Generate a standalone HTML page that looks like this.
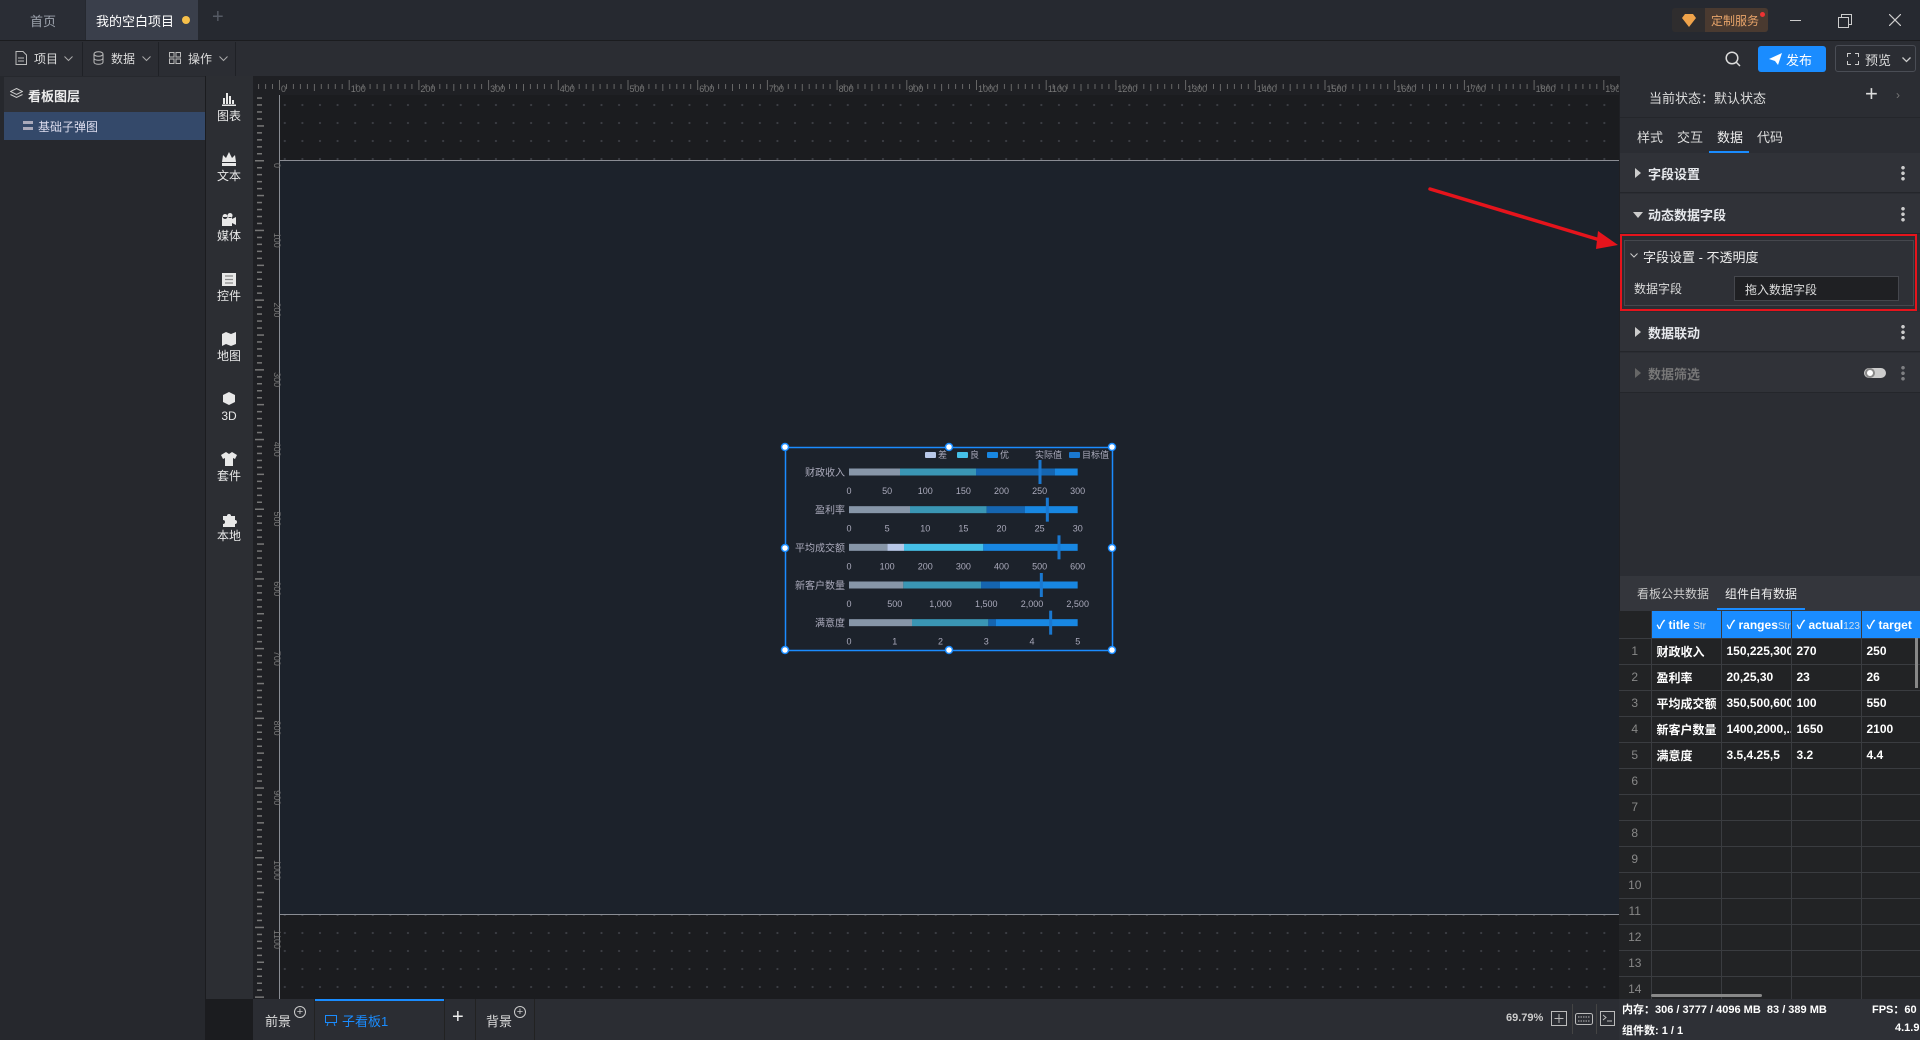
<!DOCTYPE html>
<html><head><meta charset="utf-8">
<style>
*{margin:0;padding:0;box-sizing:border-box}
body{width:1920px;height:1040px;overflow:hidden;background:#1b1c1f;font-family:"Liberation Sans","Noto Sans CJK SC",sans-serif;font-size:12px;color:#d0d3d8;position:relative}
.a{position:absolute}
.t{white-space:nowrap}
.sec{position:absolute;left:1620px;width:300px;height:40px;background:#303238;border-bottom:1px solid #24262b}
.sec .tri{position:absolute;left:15px;top:15px;width:0;height:0;border-top:5px solid transparent;border-bottom:5px solid transparent;border-left:6px solid #ccc}
.sec .tri.d{left:13px;top:18px;border-left:5px solid transparent;border-right:5px solid transparent;border-top:6px solid #ccc;border-bottom:0}
.sec .lb{position:absolute;left:28px;top:11px;font-size:13px;font-weight:bold;color:#e6e8ec}
.sec .dots{position:absolute;left:281px;top:12px;width:4px;height:16px;background:radial-gradient(circle,#ccc 1.6px,transparent 2px) 0 0/4px 5.5px repeat-y}
.tb td{border-right:1px solid #3a3c40;border-bottom:1px solid #3a3c40;height:26px;padding:0 5px;font-size:12px;color:#fff;font-weight:bold;white-space:nowrap;overflow:hidden}
.tb td.n{color:#888;text-align:center;font-weight:normal;padding:0}
.tb{border-collapse:collapse;table-layout:fixed;background:#222325}
</style></head><body>
<div class="a" style="left:0;top:0;width:1920px;height:41px;background:#262930;border-bottom:1px solid #1b1c1f"></div>
<div class="a" style="left:0;top:0;width:85px;height:40px;background:#2a2d35"></div>
<div class="a t" style="left:30px;top:11px;color:#9da3ad;font-size:13px">首页</div>
<div class="a" style="left:86px;top:0;width:112px;height:40px;background:#3a3f4b"></div>
<div class="a t" style="left:96px;top:11px;color:#fff;font-size:13px">我的空白项目</div>
<div class="a" style="left:182px;top:16px;width:8px;height:8px;border-radius:50%;background:#f7c04a"></div>
<div class="a t" style="left:212px;top:6px;color:#555a64;font-size:20px">+</div>
<div class="a" style="left:1672px;top:8px;width:96px;height:24px;background:#2f2d2e;border-radius:3px"></div>
<div class="a" style="left:1705px;top:8px;width:63px;height:24px;background:#4a3a30;border-radius:0 3px 3px 0"></div>
<svg class="a" style="left:1682px;top:14px" width="14" height="13"><path d="M3 0h8l3 4-7 9-7-9z" fill="#f0a34a"/></svg>
<div class="a t" style="left:1711px;top:12px;color:#e8a46a;font-size:12px">定制服务</div>
<div class="a" style="left:1760px;top:12px;width:5px;height:5px;border-radius:50%;background:#e33"></div>
<div class="a" style="left:1790px;top:20px;width:11px;height:1px;background:#ccc"></div>
<svg class="a" style="left:1838px;top:14px" width="14" height="14"><rect x="0.5" y="3.5" width="10" height="10" fill="none" stroke="#ccc"/><path d="M3.5 3.5V.5h10v10h-3" fill="none" stroke="#ccc"/></svg>
<svg class="a" style="left:1889px;top:14px" width="12" height="12"><path d="M0 0L12 12M12 0L0 12" stroke="#ccc" stroke-width="1.2"/></svg>

<div class="a" style="left:0;top:41px;width:1920px;height:35px;background:#2b2d33"></div>
<div class="a" style="left:82px;top:42px;width:1px;height:34px;background:#1f2126"></div>
<div class="a" style="left:158px;top:42px;width:1px;height:34px;background:#1f2126"></div>
<div class="a" style="left:235px;top:42px;width:1px;height:34px;background:#1f2126"></div>
<svg class="a" style="left:15px;top:51px" width="12" height="14"><path d="M1 .5h7l3.5 3.5v9.5H1z M3 7h6M3 10h6" fill="none" stroke="#bbb"/></svg>
<div class="a t" style="left:34px;top:50px;font-size:12px;color:#ddd">项目</div>
<svg class="a" style="left:64px;top:56px" width="9" height="6"><path d="M.5.5l4 4 4-4" fill="none" stroke="#aaa"/></svg>
<svg class="a" style="left:93px;top:51px" width="11" height="14"><ellipse cx="5.5" cy="3" rx="4.5" ry="2.3" fill="none" stroke="#bbb"/><path d="M1 3v8c0 3 9 3 9 0V3M1 7c0 3 9 3 9 0" fill="none" stroke="#bbb"/></svg>
<div class="a t" style="left:111px;top:50px;font-size:12px;color:#ddd">数据</div>
<svg class="a" style="left:142px;top:56px" width="9" height="6"><path d="M.5.5l4 4 4-4" fill="none" stroke="#aaa"/></svg>
<svg class="a" style="left:169px;top:52px" width="12" height="12"><rect x=".5" y=".5" width="4.5" height="4.5" fill="none" stroke="#bbb"/><rect x="7" y=".5" width="4.5" height="4.5" fill="none" stroke="#bbb"/><rect x=".5" y="7" width="4.5" height="4.5" fill="none" stroke="#bbb"/><rect x="7" y="7" width="4.5" height="4.5" fill="none" stroke="#bbb"/></svg>
<div class="a t" style="left:188px;top:50px;font-size:12px;color:#ddd">操作</div>
<svg class="a" style="left:219px;top:56px" width="9" height="6"><path d="M.5.5l4 4 4-4" fill="none" stroke="#aaa"/></svg>
<svg class="a" style="left:1725px;top:51px" width="16" height="16"><circle cx="7" cy="7" r="5.8" fill="none" stroke="#ddd" stroke-width="1.5"/><path d="M11 11l4 4" stroke="#ddd" stroke-width="1.5"/></svg>
<div class="a" style="left:1758px;top:46px;width:68px;height:26px;background:#1a8cff;border-radius:3px"></div>
<svg class="a" style="left:1769px;top:53px" width="13" height="12"><path d="M0 6L13 0 9 12 6 8z" fill="#fff"/></svg>
<div class="a t" style="left:1786px;top:50px;color:#fff;font-size:13px">发布</div>
<div class="a" style="left:1835px;top:45px;width:81px;height:27px;border:1px solid #4a4d55;border-radius:3px"></div>
<svg class="a" style="left:1847px;top:53px" width="12" height="12"><path d="M.5 4V.5H4M8 .5h3.5V4M11.5 8v3.5H8M4 11.5H.5V8" fill="none" stroke="#ccc"/></svg>
<div class="a t" style="left:1865px;top:50px;color:#ddd;font-size:13px">预览</div>
<svg class="a" style="left:1902px;top:57px" width="9" height="6"><path d="M.5.5l4 4 4-4" fill="none" stroke="#ccc" stroke-width="1.3"/></svg>

<div class="a" style="left:0;top:76px;width:205px;height:964px;background:#26282d"></div>
<div class="a" style="left:4px;top:77px;width:201px;height:35px;background:#2f3137"></div>
<svg class="a" style="left:10px;top:88px" width="13" height="12"><path d="M6.5.5L12.5 3.5 6.5 6.5.5 3.5z M.5 6.5l6 3 6-3" fill="none" stroke="#ccc"/></svg>
<div class="a t" style="left:28px;top:86px;font-size:13px;color:#eee;font-weight:bold">看板图层</div>
<div class="a" style="left:4px;top:112px;width:201px;height:28px;background:#34496a"></div>
<div class="a" style="left:23px;top:121px;width:10px;height:3px;background:#aab"></div>
<div class="a" style="left:23px;top:127px;width:10px;height:3px;background:#aab"></div>
<div class="a t" style="left:38px;top:118px;font-size:12px;color:#dde">基础子弹图</div>
<div class="a" style="left:206px;top:76px;width:47px;height:923px;background:#2c2e33"></div>
<div class="a" style="left:253px;top:76px;width:27px;height:923px;background:#1f2024"></div>
<div class="a" style="left:253px;top:76px;width:1367px;height:19px;background:#1f2024"></div>
<div class="a" style="left:280px;top:95px;width:1340px;height:904px;background-color:#1b1c1f;background-image:radial-gradient(circle,#3c3e44 0.9px,transparent 1.3px);background-size:17.6px 18px;background-position:-4px 1px"></div>
<div class="a" style="left:280px;top:160px;width:1340px;height:755px;background:#1c222b;border-top:1px solid #8a8d94;border-bottom:1px solid #8a8d94"></div>
<div class="a" style="left:279px;top:95px;width:1px;height:904px;background:#8a8d94"></div>
<svg class="a" style="left:0;top:0" width="1920" height="1040" id="sv"></svg>

<div class="a" style="left:253px;top:999px;width:1367px;height:41px;background:#2b2d33"></div>
<div class="a" style="left:314px;top:999px;width:1px;height:41px;background:#222"></div>
<div class="a" style="left:315px;top:999px;width:129px;height:2px;background:#1a8cff"></div>
<div class="a" style="left:444px;top:999px;width:1px;height:41px;background:#222"></div>
<div class="a" style="left:475px;top:999px;width:1px;height:41px;background:#222"></div>
<div class="a" style="left:534px;top:999px;width:1px;height:41px;background:#222"></div>
<div class="a t" style="left:265px;top:1011px;color:#ddd;font-size:13px">前景</div>
<div class="a" style="left:294px;top:1006px;width:12px;height:12px;border:1px solid #ccc;border-radius:50%;font-size:11px;line-height:10px;text-align:center;color:#ccc">+</div>
<svg class="a" style="left:325px;top:1015px" width="12" height="11"><rect x=".5" y=".5" width="11" height="7" fill="none" stroke="#1a8cff"/><path d="M3 8l-1 3M9 8l1 3" stroke="#1a8cff"/></svg>
<div class="a t" style="left:342px;top:1011px;color:#1a8cff;font-size:13px">子看板1</div>
<div class="a t" style="left:452px;top:1006px;color:#eee;font-size:20px">+</div>
<div class="a t" style="left:486px;top:1011px;color:#ddd;font-size:13px">背景</div>
<div class="a" style="left:514px;top:1006px;width:12px;height:12px;border:1px solid #ccc;border-radius:50%;font-size:11px;line-height:10px;text-align:center;color:#ccc">+</div>
<div class="a t" style="left:1506px;top:1012px;color:#ccc;font-size:11px;font-weight:bold">69.79%</div>
<svg class="a" style="left:1551px;top:1011px" width="16" height="15"><rect x=".5" y=".5" width="15" height="14" fill="none" stroke="#bbb"/><path d="M8 3v9M3.5 7.5h9" stroke="#bbb"/></svg>
<div class="a" style="left:1572px;top:1004px;width:1px;height:30px;background:#444"></div>
<svg class="a" style="left:1575px;top:1013px" width="18" height="12"><rect x=".5" y=".5" width="17" height="11" rx="2" fill="none" stroke="#bbb"/><path d="M3 4h12M3 8h12" stroke="#bbb" stroke-dasharray="1.5 1"/></svg>
<div class="a" style="left:1596px;top:1004px;width:1px;height:30px;background:#444"></div>
<svg class="a" style="left:1600px;top:1011px" width="15" height="15"><rect x=".5" y=".5" width="14" height="14" fill="none" stroke="#bbb"/><path d="M3 4l3 2.5L3 9M7 10h5" fill="none" stroke="#bbb"/></svg>

<div class="a" style="left:1619px;top:76px;width:301px;height:923px;background:#2b2d33"></div>
<div class="a" style="left:1619px;top:76px;width:1px;height:964px;background:#1f2024"></div>
<div class="a t" style="left:1649px;top:88px;color:#ddd;font-size:13px">当前状态：默认状态</div>
<div class="a t" style="left:1865px;top:81px;color:#ddd;font-size:22px">+</div>
<div class="a t" style="left:1896px;top:88px;color:#777;font-size:12px">›</div>
<div class="a" style="left:1620px;top:117px;width:300px;height:1px;background:#24262b"></div>
<div class="a t" style="left:1637px;top:127px;color:#ddd;font-size:13px">样式</div>
<div class="a t" style="left:1677px;top:127px;color:#ddd;font-size:13px">交互</div>
<div class="a t" style="left:1717px;top:127px;color:#eee;font-size:13px">数据</div>
<div class="a t" style="left:1757px;top:127px;color:#ddd;font-size:13px">代码</div>
<div class="a" style="left:1709px;top:151px;width:40px;height:2px;background:#1a8cff"></div>
<div class="sec" style="top:153px"><div class="tri"></div><div class="lb">字段设置</div><div class="dots"></div></div>
<div class="sec" style="top:194px"><div class="tri d"></div><div class="lb">动态数据字段</div><div class="dots"></div></div>
<div class="a" style="left:1620px;top:234px;width:300px;height:78px;background:#2b2d33"></div>
<div class="a" style="left:1624px;top:240px;width:290px;height:66px;background:#2e3036;border:1px solid #45474d"></div>
<div class="a" style="left:1620px;top:234px;width:297px;height:77px;border:2px solid #e5141c"></div>
<svg class="a" style="left:1630px;top:253px" width="8" height="5"><path d="M.5.5l3.5 3.5 3.5-3.5" fill="none" stroke="#ccc"/></svg>
<div class="a t" style="left:1643px;top:247px;color:#eee;font-size:13px">字段设置 - 不透明度</div>
<div class="a t" style="left:1634px;top:280px;color:#ddd;font-size:12px">数据字段</div>
<div class="a" style="left:1734px;top:276px;width:165px;height:25px;background:#1f2023;border:1px solid #45474d"></div>
<div class="a t" style="left:1745px;top:281px;color:#ddd;font-size:12px">拖入数据字段</div>
<div class="sec" style="top:312px"><div class="tri"></div><div class="lb">数据联动</div><div class="dots"></div></div>
<div class="sec" style="top:353px"><div class="tri" style="border-left-color:#666"></div><div class="lb" style="color:#777">数据筛选</div><div class="dots" style="opacity:.5"></div></div>
<div class="a" style="left:1864px;top:368px;width:22px;height:10px;border-radius:5px;background:#ccc"></div>
<div class="a" style="left:1865px;top:368px;width:10px;height:10px;border-radius:50%;background:#fff;border:2px solid #888"></div>
<div class="a" style="left:1620px;top:576px;width:300px;height:35px;background:#34363c"></div>
<div class="a t" style="left:1637px;top:585px;color:#ccc;font-size:12px">看板公共数据</div>
<div class="a t" style="left:1725px;top:585px;color:#eee;font-size:12px">组件自有数据</div>
<div class="a" style="left:1717px;top:608px;width:88px;height:2px;background:#1a8cff"></div>
<div class="a" style="left:1619px;top:611px;width:301px;height:388px;background:#222325;overflow:hidden">
<table class="tb" style="width:330px">
<colgroup><col style="width:32px"><col style="width:70px"><col style="width:70px"><col style="width:70px"><col style="width:88px"></colgroup>
<tr style="background:#1a8cff"><td class="n" style="background:#222325;height:27px"></td><td style="height:27px">✓ title <span style="font-weight:normal;font-size:10px;color:#cde">Str</span></td><td>✓ ranges<span style="font-weight:normal;font-size:10px;color:#cde">Str</span></td><td>✓ actual<span style="font-weight:normal;font-size:10px;color:#cde">123</span></td><td>✓ target</td></tr>
<tr><td class="n">1</td><td>财政收入</td><td>150,225,300</td><td>270</td><td>250</td></tr>
<tr><td class="n">2</td><td>盈利率</td><td>20,25,30</td><td>23</td><td>26</td></tr>
<tr><td class="n">3</td><td>平均成交额</td><td>350,500,600</td><td>100</td><td>550</td></tr>
<tr><td class="n">4</td><td>新客户数量</td><td>1400,2000,...</td><td>1650</td><td>2100</td></tr>
<tr><td class="n">5</td><td>满意度</td><td>3.5,4.25,5</td><td>3.2</td><td>4.4</td></tr>
<tr><td class="n">6</td><td></td><td></td><td></td><td></td></tr>
<tr><td class="n">7</td><td></td><td></td><td></td><td></td></tr>
<tr><td class="n">8</td><td></td><td></td><td></td><td></td></tr>
<tr><td class="n">9</td><td></td><td></td><td></td><td></td></tr>
<tr><td class="n">10</td><td></td><td></td><td></td><td></td></tr>
<tr><td class="n">11</td><td></td><td></td><td></td><td></td></tr>
<tr><td class="n">12</td><td></td><td></td><td></td><td></td></tr>
<tr><td class="n">13</td><td></td><td></td><td></td><td></td></tr>
<tr><td class="n">14</td><td></td><td></td><td></td><td></td></tr>
</table></div>
<div class="a" style="left:1651px;top:994px;width:111px;height:3px;background:#888;border-radius:2px"></div>
<div class="a" style="left:1915px;top:638px;width:3px;height:50px;background:#888"></div>
<div class="a" style="left:1619px;top:999px;width:301px;height:41px;background:#2e3036"></div>
<div class="a t" style="left:1622px;top:1001px;color:#fff;font-size:11px;font-weight:bold">内存：306 / 3777 / 4096 MB&nbsp; 83 / 389 MB</div>
<div class="a t" style="left:1872px;top:1001px;color:#fff;font-size:11px;font-weight:bold">FPS：60</div>
<div class="a t" style="left:1622px;top:1022px;color:#fff;font-size:11px;font-weight:bold">组件数: 1 / 1</div>
<div class="a t" style="left:1895px;top:1022px;color:#fff;font-size:11px;font-weight:bold">4.1.9</div>

<script>
var sv=document.getElementById('sv'),h='';
for(var u=-70;u<=1920;u+=10){var x=279+u*0.697;if(x<253||x>1619)continue;var m=u%100==0,f=u%50==0;
h+='<rect x="'+x.toFixed(1)+'" y="'+(m?80:84)+'" width="1" height="'+(m?10:f?7:5)+'" fill="#666"/>';
if(m)h+='<text x="'+(x+2)+'" y="92" fill="#777" font-size="9" font-family="Liberation Sans">'+u+'</text>';}
for(var u=-90;u<=1200;u+=10){var y=160+u*0.697;if(y<96||y>998)continue;var m=u%100==0,f=u%50==0;
h+='<rect x="'+(m?255:257)+'" y="'+y.toFixed(1)+'" width="'+(m?9:f?7:5)+'" height="1.5" fill="#777"/>';
if(m)h+='<text transform="translate(274,'+(y+3)+') rotate(90)" fill="#777" font-size="9" font-family="Liberation Sans">'+u+'</text>';}
var ic=['图表','文本','媒体','控件','地图','3D','套件','本地'];
var ip=[
'M-7 7h14v-1.5h-14z M-6 5v-6h2v6z M-3 5v-11h2v11z M0 5v-8h2v8z M3 5v-4h2v4z',
'M-7 7h14v-3h-14z M-7 3l1-7 3 3 3-6 3 6 3-3 1 7z',
'M-7 -2h10v9h-10z M3 0l4-2v8l-4-2z M-4 -5a2.5 2.5 0 1 0 .1 0z M1 -6a2.5 2.5 0 1 0 .1 0z',
'M-7 -6h14v13h-14z',
'M-7 -5l4-2 5 2 5-2v12l-5 2-5-2-4 2z',
'M0 -7l6 3v7l-6 3-6-3v-7z',
'M-3 -7l3 2 3-2 5 3-2 4-2-1v8h-8v-8l-2 1-2-4z',
'M-6 -3h4a2 2 0 1 1 4 0h4v4a2 2 0 1 1 0 4v3h-12v-3a2 2 0 1 0 0-4z'];
for(var i=0;i<8;i++){var cy=99+i*60;
h+='<path transform="translate(229,'+cy+')" d="'+ip[i]+'" fill="#e8e8e8" fill-rule="evenodd"/>';
if(i==3)h+='<path transform="translate(229,'+cy+')" d="M-4 -3h8M-4 0.5h8M-4 4h8" stroke="#888" stroke-width="1.3"/>';
h+='<text x="229" y="'+(cy+21)+'" text-anchor="middle" fill="#e8e8e8" font-size="12" font-family="Liberation Sans,Noto Sans CJK SC">'+ic[i]+'</text>';}
var X0=849,X1=1077.7;
var rows=[['财政收入',[[207,360,'#8796a8'],[360,588,'#3a96b4'],[588,825,'#1565b0'],[825,893,'#1887e2']],780,['0','50','100','150','200','250','300']],
['盈利率',[[207,390,'#8796a8'],[390,620,'#3a96b4'],[620,735,'#1565b0'],[735,893,'#1887e2']],802,['0','5','10','15','20','25','30']],
['平均成交额',[[207,322,'#8796a8'],[322,372,'#b8c8e8'],[372,610,'#45c0e8'],[610,893,'#1887e2']],837,['0','100','200','300','400','500','600']],
['新客户数量',[[207,370,'#8796a8'],[370,603,'#3a96b4'],[603,660,'#1565b0'],[660,893,'#1887e2']],784,['0','500','1,000','1,500','2,000','2,500']],
['满意度',[[207,396,'#8796a8'],[396,625,'#3a96b4'],[625,648,'#1565b0'],[648,893,'#1887e2']],812,['0','1','2','3','4','5']]];
for(var r=0;r<5;r++){var cy=440+(96+r*113)/3;var R=rows[r];
R[1].forEach(function(s){h+='<rect x="'+(780+s[0]/3)+'" y="'+(cy-3.5)+'" width="'+((s[1]-s[0])/3)+'" height="7" fill="'+s[2]+'"/>';});
h+='<rect x="'+(780+R[2]/3-1.5)+'" y="'+(cy-12)+'" width="3" height="24" fill="#1a78d0"/>';
h+='<text x="845" y="'+(cy+4)+'" text-anchor="end" fill="#aab" font-size="10" font-family="Liberation Sans,Noto Sans CJK SC">'+R[0]+'</text>';
var n=R[3].length;for(var k=0;k<n;k++){h+='<text x="'+(X0+k*(X1-X0)/(n-1))+'" y="'+(cy+22)+'" text-anchor="middle" fill="#aab" font-size="9" font-family="Liberation Sans">'+R[3][k]+'</text>';}}
var lg=[[925,'#b8c8e8','差'],[957,'#45c0e8','良'],[987,'#1887e2','优'],[1069,'#1a78d0','目标值']];
lg.forEach(function(l){h+='<rect x="'+l[0]+'" y="452" width="11" height="6" rx="1" fill="'+l[1]+'"/><text x="'+(l[0]+13)+'" y="458" fill="#aab" font-size="9" font-family="Liberation Sans,Noto Sans CJK SC">'+l[2]+'</text>';});
h+='<text x="1035" y="458" fill="#aab" font-size="9" font-family="Liberation Sans,Noto Sans CJK SC">实际值</text>';
h+='<rect x="785.5" y="447.5" width="327" height="203" fill="none" stroke="#1a8cff" stroke-width="1.5"/>';
[[785,447],[949,447],[1112,447],[785,548],[1112,548],[785,650],[949,650],[1112,650]].forEach(function(p){h+='<circle cx="'+p[0]+'" cy="'+p[1]+'" r="3.5" fill="#fff" stroke="#1a8cff" stroke-width="1.5"/>';});
h+='<line x1="1430" y1="189" x2="1600" y2="240" stroke="#e5141c" stroke-width="3.5" stroke-linecap="round"/><path d="M1618 245L1598 231 1596 249z" fill="#e5141c"/>';
sv.innerHTML=h;
</script>
</body></html>
